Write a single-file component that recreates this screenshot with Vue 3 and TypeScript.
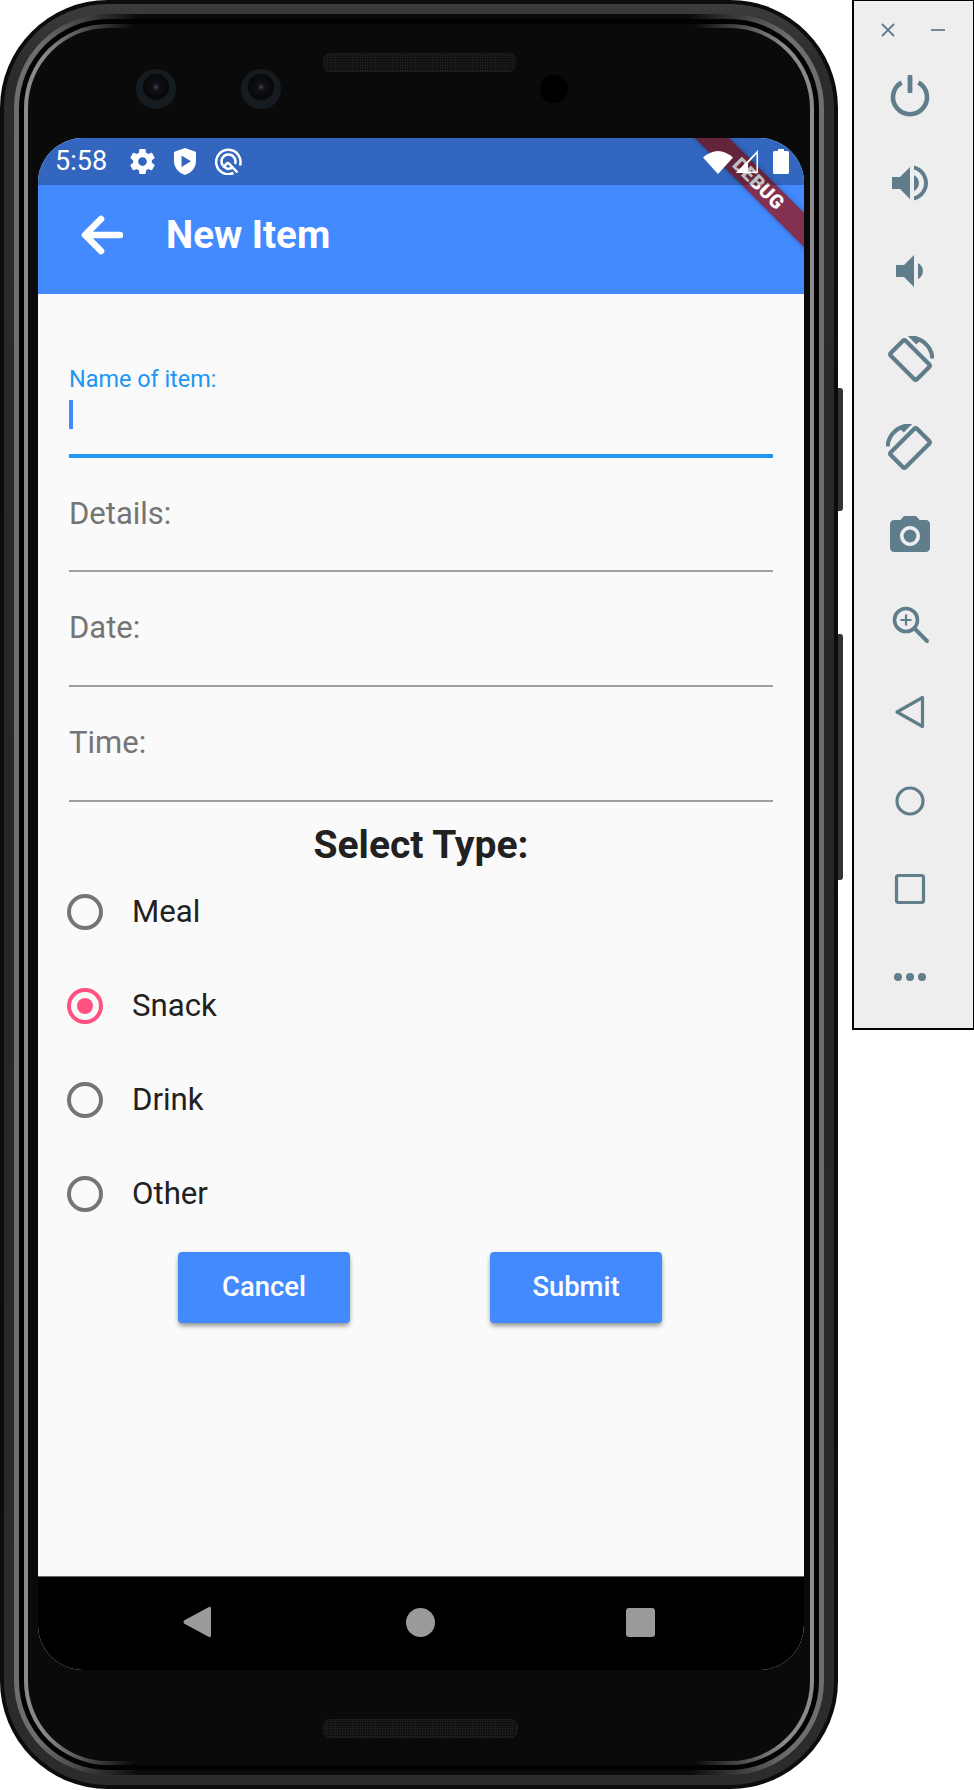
<script setup lang="ts">
const fields = [
  { label: 'Details:' },
  { label: 'Date:' },
  { label: 'Time:' },
]
const types = [
  { name: 'Meal', selected: false },
  { name: 'Snack', selected: true },
  { name: 'Drink', selected: false },
  { name: 'Other', selected: false },
]
</script>

<template>
  <div class="page">
    <div class="phone">
      <span class="side-btn power-btn"></span>
      <span class="side-btn volume-btn"></span>
      <div class="ring ring-1">
        <div class="ring ring-2">
          <div class="ring ring-3">
            <div class="ring ring-4">
              <div class="ring ring-5">
                <div class="face">
                  <span class="mesh mesh-top"></span>
                  <span class="lens lens-a"></span>
                  <span class="lens lens-b"></span>
                  <span class="sensor"></span>
                  <span class="mesh mesh-bottom"></span>
                  <div class="screen">
                    <header class="appbar">
                      <svg class="back-arrow" viewBox="0 0 42 40"><path d="M39 20 H5 M20 4 L4 20 L20 36" fill="none" stroke="#fff" stroke-width="6.6" stroke-linecap="round" stroke-linejoin="round" /></svg>
                      <h1 class="title">New Item</h1>
                    </header>
                    <main class="content">
                      <div class="field focused">
                        <label class="float-label">Name of item:</label>
                        <span class="caret"></span>
                      </div>
                      <div v-for="f in fields" :key="f.label" class="field">
                        <label class="hint">{{ f.label }}</label>
                      </div>
                      <h2 class="select-title">Select Type:</h2>
                      <div v-for="t in types" :key="t.name" class="radio-row">
                        <span class="radio" :class="{ on: t.selected }"></span>
                        <span class="radio-text">{{ t.name }}</span>
                      </div>
                      <div class="buttons">
                        <button class="btn">Cancel</button>
                        <button class="btn">Submit</button>
                      </div>
                    </main>
                    <nav class="navbar">
                      <svg class="nav-ic tri" viewBox="0 0 28 32"><path d="M26 1 Q28 0 28 3 V29 Q28 32 26 31 L1 17.5 Q0 16 1 14.5 Z" /></svg>
                      <span class="nav-ic dot"></span>
                      <span class="nav-ic sq"></span>
                    </nav>
                    <div class="banner">DEBUG</div>
                    <div class="statusbar">
                      <span class="clock">5:58</span>
                      <svg class="st gear" viewBox="2 2 20 20"><path d="M19.43 12.98c.04-.32.07-.64.07-.98s-.03-.66-.07-.98l2.11-1.65c.19-.15.24-.42.12-.64l-2-3.46c-.12-.22-.39-.3-.61-.22l-2.49 1c-.52-.4-1.08-.73-1.69-.98l-.38-2.65C14.46 2.18 14.25 2 14 2h-4c-.25 0-.46.18-.49.42l-.38 2.65c-.61.25-1.17.59-1.69.98l-2.49-1c-.23-.09-.49 0-.61.22l-2 3.46c-.13.22-.07.49.12.64l2.11 1.65c-.04.32-.07.65-.07.98s.03.66.07.98l-2.11 1.65c-.19.15-.24.42-.12.64l2 3.46c.12.22.39.3.61.22l2.49-1c.52.4 1.08.73 1.69.98l.38 2.65c.03.24.24.42.49.42h4c.25 0 .46-.18.49-.42l.38-2.65c.61-.25 1.17-.59 1.69-.98l2.49 1c.23.09.49 0 .61-.22l2-3.46c.12-.22.07-.49-.12-.64l-2.11-1.65zM12 15.5c-1.93 0-3.5-1.57-3.5-3.5s1.57-3.5 3.5-3.5 3.5 1.57 3.5 3.5-1.57 3.5-3.5 3.5z" /></svg>
                      <svg class="st shield" viewBox="0 0 22 27"><path fill-rule="evenodd" d="M11 0 L21 3.6 Q22 4 22 5 V13 C22 20 17 25 11 27 C5 25 0 20 0 13 V5 Q0 4 1 3.6 Z M7.5 7.5 V19 L17 13.2 Z" /></svg>
                      <svg class="st q" viewBox="0 0 27 27"><g fill="none" stroke="#fff" stroke-width="2.5"><path d="M18.5 25 A12.2 12.2 0 1 1 25 17.5" /><path d="M7.8 17.5 A7 7 0 1 1 20 16" /><path d="M13 14.5 L8.8 18.6 L12.5 21 L17 20 M13 14.5 L22.5 24.5" /></g></svg>
                      <span class="st-space"></span>
                      <svg class="wifi" viewBox="0 0 30 24"><path d="M0 7.5 Q15 -5.5 30 7.5 L15 24 Z" /></svg>
                      <svg class="cell" viewBox="0 0 24 25"><path d="M1 24 L23 1 V24 Z M5.5 22.5 H21.5 V5 Z" fill-rule="evenodd" /><path d="M1 24 L13 12 V24 Z" /></svg>
                      <svg class="battery" viewBox="0 0 16 25"><path d="M5 0 H11 V2 H14.5 Q16 2 16 3.5 V23.5 Q16 25 14.5 25 H1.5 Q0 25 0 23.5 V3.5 Q0 2 1.5 2 H5 Z" /></svg>
                    </div>
                  </div>
                </div>
              </div>
            </div>
          </div>
        </div>
      </div>
    </div>

    <aside class="panel">
      <div class="win-row">
        <svg class="win" viewBox="0 0 16 16"><path d="M2 2 L14 14 M14 2 L2 14" stroke="#607d8b" stroke-width="1.8" fill="none" /></svg>
        <svg class="win" viewBox="0 0 16 16"><path d="M1 8 H15" stroke="#607d8b" stroke-width="1.8" fill="none" /></svg>
      </div>
      <div class="tools">
        <svg class="tool" viewBox="0 0 48 48"><path d="M15.6 11.4 A17 17 0 1 0 32.4 11.4" fill="none" stroke="#607d8b" stroke-width="4.6" /><rect x="21.6" y="4" width="4.8" height="18" rx="1" /></svg>
        <svg class="tool" viewBox="0 0 24 24"><path d="M3 9v6h4l5 5V4L7 9H3zm13.5 3c0-1.77-1.02-3.29-2.5-4.03v8.05c1.48-.73 2.5-2.25 2.5-4.02zM14 3.23v2.06c2.89.86 5 3.54 5 6.71s-2.11 5.85-5 6.71v2.06c4.01-.91 7-4.49 7-8.77s-2.99-7.86-7-8.77z" /></svg>
        <svg class="tool" viewBox="0 0 24 24"><path d="M18.5 12c0-1.77-1.02-3.29-2.5-4.03v8.05c1.48-.73 2.5-2.25 2.5-4.02zM5 9v6h4l5 5V4L9 9H5z" /></svg>
        <svg class="tool thick" viewBox="0 0 24 24"><path d="M16.48 2.52c3.27 1.55 5.61 4.72 5.97 8.48h1.5C23.44 4.84 18.29 0 12 0l-.66.03 3.81 3.81 1.33-1.32zm-6.25-.77c-.59-.59-1.54-.59-2.12 0L1.75 8.11c-.59.59-.59 1.54 0 2.12l12.02 12.02c.59.59 1.54.59 2.12 0l6.36-6.36c.59-.59.59-1.54 0-2.12L10.23 1.75zm4.6 19.44L2.81 9.17l6.36-6.36 12.02 12.02-6.36 6.36z" /></svg>
        <svg class="tool thick flip" viewBox="0 0 24 24"><path d="M16.48 2.52c3.27 1.55 5.61 4.72 5.97 8.48h1.5C23.44 4.84 18.29 0 12 0l-.66.03 3.81 3.81 1.33-1.32zm-6.25-.77c-.59-.59-1.54-.59-2.12 0L1.75 8.11c-.59.59-.59 1.54 0 2.12l12.02 12.02c.59.59 1.54.59 2.12 0l6.36-6.36c.59-.59.59-1.54 0-2.12L10.23 1.75zm4.6 19.44L2.81 9.17l6.36-6.36 12.02 12.02-6.36 6.36z" /></svg>
        <svg class="tool" viewBox="0 0 24 24"><circle cx="12" cy="12" r="3.2" /><path d="M9 2L7.17 4H4c-1.1 0-2 .9-2 2v12c0 1.1.9 2 2 2h16c1.1 0 2-.9 2-2V6c0-1.1-.9-2-2-2h-3.17L15 2H9zm3 15c-2.76 0-5-2.24-5-5s2.24-5 5-5 5 2.24 5 5-2.24 5-5 5z" /></svg>
        <svg class="tool" viewBox="0 0 48 48"><g fill="none" stroke="#607d8b"><circle cx="20" cy="20" r="11.5" stroke-width="3.6" /><path d="M28.5 28.5 L41 41" stroke-width="4" stroke-linecap="round" /><path d="M20 14.5 V25.5 M14.5 20 H25.5" stroke-width="2.2" /></g></svg>
        <svg class="tool" viewBox="0 0 48 48"><path d="M36.5 9.5 V38.5 L11 24 Z" fill="none" stroke="#607d8b" stroke-width="3.2" stroke-linejoin="round" /></svg>
        <svg class="tool" viewBox="0 0 48 48"><circle cx="24" cy="24" r="13" fill="none" stroke="#607d8b" stroke-width="3.2" /></svg>
        <svg class="tool" viewBox="0 0 48 48"><rect x="10.5" y="10.5" width="27" height="27" rx="2" fill="none" stroke="#607d8b" stroke-width="3.2" /></svg>
        <svg class="tool" viewBox="0 0 48 48"><circle cx="12" cy="24" r="4" /><circle cx="24" cy="24" r="4" /><circle cx="36" cy="24" r="4" /></svg>
      </div>
    </aside>
  </div>
</template>

<style>
html, body { margin: 0; background: #fff; }
</style>

<style scoped>
.page {
  width: 974px;
  height: 1790px;
  display: flex;
  align-items: flex-start;
  gap: 14px;
  font-family: Roboto, "Liberation Sans", sans-serif;
  background: #fff;
  overflow: hidden;
}
.phone { position: relative; width: 838px; height: 1789px; flex: none; }
.side-btn {
  position: absolute;
  left: 835px;
  width: 8px;
  background: #333;
  border-radius: 0 3px 3px 0;
}
.power-btn { top: 388px; height: 123px; }
.volume-btn { top: 634px; height: 246px; }
.ring { box-sizing: border-box; height: 100%; position: relative; }
.ring-1 { padding: 4px; border-radius: 108px; background: #0c0c0c; }
.ring-2 {
  padding: 10px;
  border-radius: 104px;
  background: linear-gradient(180deg, #3c3c3c 0, #2c2c2c 60px, #262626 50%, #2c2c2c 100%);
}
.ring-3 {
  padding: 5px;
  border-radius: 94px;
  background: linear-gradient(90deg, #6e6e6e 0, #6e6e6e 25px, #0a0a0a 125px, #0a0a0a 675px, #6e6e6e 775px, #6e6e6e 100%);
}
.ring-4 { padding: 5px; border-radius: 89px; background: #020202; }
.ring-5 {
  padding: 4px;
  border-radius: 84px;
  background: linear-gradient(90deg, #8a8a8a 0, #8a8a8a 20px, #0a0a0a 110px, #0a0a0a 670px, #8a8a8a 760px, #8a8a8a 100%);
}
.face {
  position: relative;
  box-sizing: border-box;
  height: 100%;
  padding: 110px 5px 91px 10px;
  border-radius: 80px;
  background: #0a0a0a;
}
.mesh {
  position: absolute;
  box-sizing: border-box;
  height: 19px;
  border-radius: 7px;
  border: 1px solid #1c1c1c;
  background-color: #111;
  background-image: radial-gradient(#3a3a3a 0.6px, transparent 0.8px);
  background-size: 2.5px 2.5px;
}
.mesh-top { left: 295px; width: 193px; top: 25px; }
.mesh-bottom { left: 295px; width: 195px; top: 1691px; }
.lens {
  position: absolute;
  top: 41px;
  width: 40px;
  height: 40px;
  border-radius: 50%;
  background: radial-gradient(circle at 50% 45%, #40445a 0, #101016 12%, #08080b 42%, #161b1f 46%, #161b1f 100%);
}
.lens-a { left: 108px; }
.lens-b { left: 213px; }
.sensor {
  position: absolute;
  left: 512px;
  top: 47px;
  width: 28px;
  height: 28px;
  border-radius: 50%;
  background: #000;
}
.screen {
  position: relative;
  box-sizing: border-box;
  width: 766px;
  height: 1532px;
  border-radius: 45px;
  overflow: hidden;
  background: #fafafa;
  display: flex;
  flex-direction: column;
}
.statusbar {
  position: absolute;
  left: 0;
  right: 0;
  top: 0;
  box-sizing: border-box;
  height: 47px;
  background: rgba(0, 0, 0, .25);
  display: flex;
  align-items: center;
  padding: 0 15px 0 17px;
  color: #fff;
}
.clock { font-size: 27px; width: 75px; line-height: 47px; }
.st { fill: #fff; display: block; }
.gear { width: 25px; height: 25px; margin-right: 19px; }
.shield { width: 22px; height: 27px; margin-right: 19px; }
.q { width: 27px; height: 27px; }
.st-space { flex: 1; }
.wifi { width: 30px; height: 24px; fill: #fff; margin-right: 2px; }
.cell { width: 24px; height: 25px; fill: #fff; margin-right: 14px; }
.battery { width: 16px; height: 25px; fill: #fff; }
.appbar {
  flex: none;
  height: 156px;
  background: #448aff;
  display: flex;
  align-items: center;
  padding: 47px 0 9px 43px;
  box-sizing: border-box;
}
.back-arrow { width: 42px; height: 40px; margin-right: 43px; display: block; }
.title {
  margin: 0;
  color: #fff;
  font-size: 38.5px;
  font-weight: 700;
  line-height: 1;
}
.content {
  flex: 1;
  box-sizing: border-box;
  padding: 50px 31px 0;
  background: #fafafa;
}
.field {
  position: relative;
  box-sizing: border-box;
  height: 114.4px;
  border-bottom: 2px solid #9e9e9e;
}
.field:nth-child(2) { height: 113.6px; }
.field:nth-child(3) { height: 115.2px; }
.field.focused { border-bottom: 4px solid #2196f3; }
.float-label {
  display: block;
  padding-top: 22px;
  color: #2196f3;
  font-size: 23.4px;
  line-height: 26px;
}
.caret {
  display: block;
  width: 4px;
  height: 29px;
  margin-top: 8px;
  background: #448aff;
}
.hint {
  display: block;
  padding-top: 38px;
  color: #757575;
  font-size: 31px;
  line-height: 36px;
}
.select-title {
  margin: 23px 0 0;
  text-align: center;
  color: #212121;
  font-size: 39px;
  font-weight: 700;
  line-height: 40px;
  height: 40px;
}
.radio-row {
  height: 94px;
  display: flex;
  align-items: center;
  margin-left: -2px;
}
.radio {
  box-sizing: border-box;
  width: 36px;
  height: 36px;
  border: 4px solid #757575;
  border-radius: 50%;
  margin-right: 29px;
  flex: none;
  position: relative;
}
.radio.on { border-color: #ff5080; }
.radio.on::after {
  content: "";
  position: absolute;
  left: 6px;
  top: 6px;
  width: 16px;
  height: 16px;
  border-radius: 50%;
  background: #ff5080;
}
.radio-text { font-size: 31.2px; color: #212121; line-height: 36px; }
.buttons {
  display: flex;
  gap: 140px;
  margin: 11px 0 0 109px;
}
.btn {
  width: 172px;
  height: 71px;
  border: 0;
  border-radius: 4px;
  background: #448aff;
  color: #fff;
  font-family: inherit;
  font-size: 27.4px;
  font-weight: 500;
  padding: 0;
  box-shadow: 0 4px 4px -1px rgba(0,0,0,.28), 0 2px 5px rgba(0,0,0,.2);
}
.navbar {
  flex: none;
  box-sizing: border-box;
  height: 94px;
  border-top: 1px solid #666;
  background: #000;
  position: relative;
  display: flex;
  align-items: center;
  padding: 0 0 3px 145px;
}
.nav-ic { fill: #9a9a9a; display: block; flex: none; }
.tri { width: 28px; height: 32px; margin-right: 195px; }
.dot { width: 29px; height: 29px; border-radius: 50%; background: #9a9a9a; margin-right: 191px; }
.sq { width: 29px; height: 29px; border-radius: 3px; background: #9a9a9a; }
.banner {
  position: absolute;
  left: 600px;
  top: 33.5px;
  width: 240px;
  height: 24px;
  transform: rotate(45deg);
  background: rgba(149, 25, 36, .8);
  box-shadow: 0 0 5px rgba(0,0,0,.35);
  color: #fff;
  font-size: 19.5px;
  font-weight: 900;
  letter-spacing: .3px;
  line-height: 24px;
  text-align: center;
}
.panel {
  box-sizing: border-box;
  flex: none;
  width: 122px;
  height: 1030px;
  background: #eee;
  border: 1px solid #000;
  border-left-width: 2px;
  border-bottom-width: 2px;
  display: flex;
  flex-direction: column;
}
.win-row {
  display: flex;
  justify-content: space-between;
  padding: 21px 27px 0 26px;
  height: 50px;
  box-sizing: border-box;
}
.win { width: 16px; height: 16px; display: block; }
.tools {
  display: flex;
  flex-direction: column;
  align-items: center;
  padding-top: 33px;
  margin-left: -8px;
}
.tool { width: 48px; height: 48px; margin-bottom: 40.2px; fill: #607d8b; display: block; flex: none; }
.thick { stroke: #607d8b; stroke-width: .6px; }
.flip { transform: scaleX(-1); }
</style>
